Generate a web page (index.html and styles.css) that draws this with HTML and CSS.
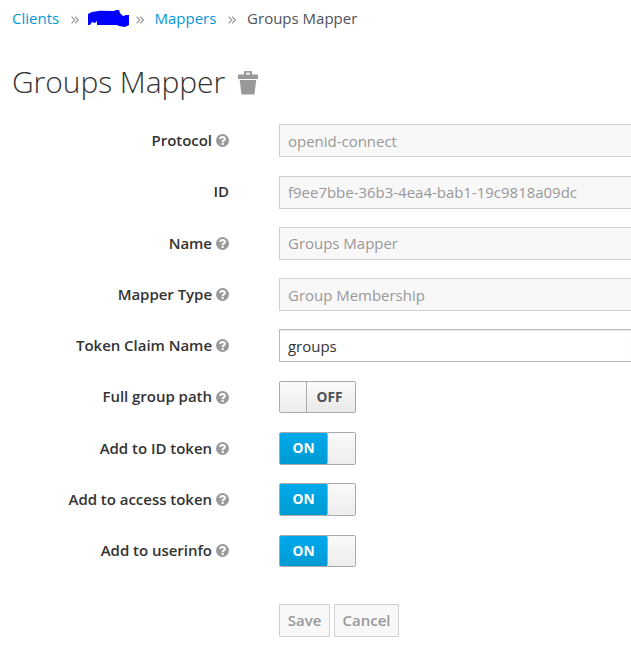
FILE: index.html
```html
<!DOCTYPE html>
<html lang="en">
<head>
<meta charset="utf-8">
<title>Groups Mapper</title>
<link rel="stylesheet" href="styles.css">
</head>
<body>
<svg class="defs" aria-hidden="true">
  <symbol id="help" viewBox="0 0 13 13">
    <circle cx="6.5" cy="6.5" r="6.5" fill="#999"/>
    <path d="M3.9 4.8Q4.6 3 6.6 3T8.9 4.9Q8.9 5.8 7.6 6.5Q6.6 7 6.6 8.2" fill="none" stroke="#fff" stroke-width="2"/>
    <path d="M5.6 9h2.1v2h-2.1z" fill="#fff"/>
  </symbol>
  <symbol id="sep" viewBox="0 0 8 8">
    <path d="M.6.6L3.8 4L.6 7.4M4.1.6L7.3 4L4.1 7.4" fill="none" stroke="#999" stroke-width="1.2"/>
  </symbol>
</svg>
<ol class="breadcrumb">
  <li><a>Clients</a></li>
  <li><svg class="sep"><use href="#sep"/></svg><svg class="scribble" viewBox="0 0 41 17"><path d="M0 4L4 2L12 .7L26 1L28 0H31L32 3L35 6L38 5H41V15L37 17L31 16L29 15H9V11L7 13L4 12L2 15H0Z" fill="#00f"/></svg></li>
  <li><svg class="sep"><use href="#sep"/></svg><a>Mappers</a></li>
  <li><svg class="sep"><use href="#sep"/></svg><span>Groups Mapper</span></li>
</ol>
<h1>Groups Mapper
  <svg class="trash" viewBox="0 0 20 24"><path d="M0 4.2Q0 3.6.6 3.6H6V1.2Q6 0 7.2 0H12.8Q14 0 14 1.2V3.6H19.4Q20 3.6 20 4.2V8H0ZM8 3.6H12V1.8H8ZM1.7 9H18.3L16.4 23.5H3.4Z" fill="#999" fill-rule="evenodd"/></svg>
</h1>
<form>
  <div class="row"><label>Protocol</label><svg class="help"><use href="#help"/></svg><input value="openid-connect" disabled></div>
  <div class="row"><label class="plain">ID</label><input value="f9ee7bbe-36b3-4ea4-bab1-19c9818a09dc" disabled></div>
  <div class="row"><label>Name</label><svg class="help"><use href="#help"/></svg><input value="Groups Mapper" disabled></div>
  <div class="row"><label>Mapper Type</label><svg class="help"><use href="#help"/></svg><input value="Group Membership" disabled></div>
  <div class="row"><label>Token Claim Name</label><svg class="help"><use href="#help"/></svg><input value="groups"></div>
  <div class="row"><label>Full group path</label><svg class="help"><use href="#help"/></svg><div class="switch off"><i></i><b>OFF</b></div></div>
  <div class="row"><label>Add to ID token</label><svg class="help"><use href="#help"/></svg><div class="switch on"><b>ON</b><i></i></div></div>
  <div class="row"><label>Add to access token</label><svg class="help"><use href="#help"/></svg><div class="switch on"><b>ON</b><i></i></div></div>
  <div class="row"><label>Add to userinfo</label><svg class="help"><use href="#help"/></svg><div class="switch on"><b>ON</b><i></i></div></div>
  <div class="actions"><button class="save" type="button" disabled>Save</button><button class="cancel" type="button" disabled>Cancel</button></div>
</form>
</body>
</html>
```
FILE: styles.css
```css
* { box-sizing: border-box; }
body {
  margin: 0;
  padding: 8px 0 0 12px;
  height: 660px;
  overflow: hidden;
  background: #fff;
  color: #333;
  font: 15px/20px "Open Sans", sans-serif;
}
.defs { display: none; }
.breadcrumb {
  display: flex;
  height: 20px;
  margin: 0;
  padding: 0;
  list-style: none;
  color: #4d5258;
}
.breadcrumb li { display: flex; align-items: center; }
.breadcrumb a { color: #0099d3; }
.sep { width: 8px; height: 8px; margin: 3px 10.7px 0 12px; }
.scribble { width: 41px; height: 17px; margin: 0 -5px 0 -2px; }
h1 {
  display: flex;
  align-items: center;
  height: 40px;
  margin: 34px 0 22.4px;
  font-size: 30px;
  font-weight: 300;
  line-height: 40px;
  letter-spacing: -.07px;
}
.trash { width: 20px; height: 24px; margin: 2px 0 0 13px; }
.row {
  display: flex;
  align-items: center;
  height: 33px;
  margin-bottom: 18.25px;
}
.row > * { flex-shrink: 0; }
label {
  width: 200px;
  margin-top: -1.4px;
  text-align: right;
  font-weight: 600;
  letter-spacing: -.03px;
  white-space: nowrap;
}
label.plain { width: 217px; margin-right: 50px; }
.help { width: 13px; height: 13px; margin: 0 50px 0 4px; }
input {
  flex: 1;
  min-width: 0;
  height: 33px;
  padding: 0 8px;
  border: 1px solid #bababa;
  border-right: 0;
  border-radius: 1px 0 0 1px;
  background: #fff;
  color: #333;
  font: inherit;
  letter-spacing: -.02px;
  box-shadow: inset 0 1px 1px rgba(0, 0, 0, .075);
}
input:disabled {
  border-color: #d0d0d0;
  background: #f8f8f8;
  color: #999;
  box-shadow: none;
}
.switch {
  display: flex;
  width: 77px;
  height: 32.5px;
  border: 1px solid #aaa;
  border-radius: 2px;
  overflow: hidden;
  font-size: 13.75px;
  line-height: 30px;
  text-align: center;
}
.switch b { flex: 1; }
.switch i { width: 28px; background: linear-gradient(#fafafa, #ededed); }
.on i { border-left: 1px solid #aaa; border-radius: 2px 0 0 2px; }
.on b { background: linear-gradient(#00a9ec, #009bd3); color: #fff; }
.off i { width: 27px; border-right: 1px solid #aaa; }
.off b { background: linear-gradient(#fafafa, #e9e9e9); color: #4d5258; padding-right: 3px; }
.actions { display: flex; gap: 4px; margin: 36.3px 0 0 267px; }
button {
  height: 33px;
  padding: 0;
  border: 1px solid #d0d0d0;
  border-radius: 1px;
  background: #f8f8f8;
  color: #999;
  font: 600 15px/31px "Open Sans", sans-serif;
}
.save { width: 51px; }
.cancel { width: 65px; }
```
